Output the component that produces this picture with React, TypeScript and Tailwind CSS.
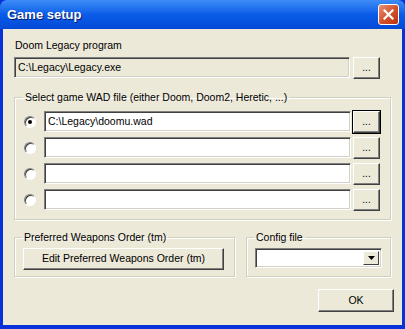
import React from 'react';

const font = { fontFamily: '"Liberation Sans", Arial, sans-serif' };

function TextBox({ value, grey }: { value?: string; grey?: boolean }) {
  return (
    <div
      className={`flex-1 h-[21px] flex items-center px-[3px] text-[10.5px] text-black border border-t-[#808080] border-l-[#808080] border-b-white border-r-white shadow-[inset_1px_1px_0_#404040,inset_-1px_-1px_0_#d4d0c8] ${
        grey ? 'bg-[#ece9d8]' : 'bg-white'
      }`}
    >
      {value}
    </div>
  );
}

function BrowseButton({ active }: { active?: boolean }) {
  return (
    <button
      className={`w-[27px] h-[22px] flex items-end justify-center pb-[5px] text-[10px] leading-none bg-[#ece9d8] border border-t-white border-l-white border-b-[#404040] border-r-[#404040] shadow-[inset_-1px_-1px_0_#808080] ${
        active ? 'outline outline-1 outline-black' : ''
      }`}
    >
      ...
    </button>
  );
}

function Radio({ checked }: { checked?: boolean }) {
  return (
    <div className="w-[12px] h-[12px] rounded-full border border-t-[#808080] border-l-[#808080] border-b-white border-r-white bg-white flex items-center justify-center shadow-[inset_1px_1px_0_#404040]">
      {checked && <div className="w-[4px] h-[4px] rounded-full bg-black" />}
    </div>
  );
}

const wadFiles = ['C:\\Legacy\\doomu.wad', '', '', ''];

export default function App() {
  return (
    <div className="w-[405px] h-[329px] flex flex-col bg-[#0831d9] overflow-hidden" style={font}>
      {/* Title bar */}
      <div className="h-[29px] flex items-center justify-between pl-[7px] pr-[6px] rounded-t-[7px] bg-gradient-to-b from-[#3d8cf7] via-[#0a5ce8] to-[#0449d6]">
        <span className="text-white font-bold text-[13px] [text-shadow:1px_1px_0_#0a1a6a]">Game setup</span>
        <div className="w-[21px] h-[21px] rounded-[3px] border border-white bg-gradient-to-br from-[#e8927a] via-[#d4532c] to-[#b8300c] flex items-center justify-center">
          <svg width="11" height="11" viewBox="0 0 11 11">
            <path d="M1.5 1.5 L9.5 9.5 M9.5 1.5 L1.5 9.5" stroke="white" strokeWidth="2.2" strokeLinecap="square" />
          </svg>
        </div>
      </div>

      {/* Body */}
      <div className="flex-1 mx-[3px] mb-[4px] bg-[#ece9d8] flex flex-col pt-[10px] pl-[11px] text-[10.5px] text-black">
        <div className="leading-[13px] pl-[1px]">Doom Legacy program</div>
        <div className="flex gap-[3px] mt-[5px] w-[366px] items-start">
          <TextBox value="C:\Legacy\Legacy.exe" grey />
          <BrowseButton />
        </div>

        <fieldset className="mt-[12px] w-[377px] border border-[#d0d0bf] shadow-[1px_1px_0_white,inset_1px_1px_0_white] pb-[8px] pt-[7px]">
          <legend className="ml-[8px] px-[2px] leading-[13px]">
            Select game WAD file (either Doom, Doom2, Heretic, ...)
          </legend>
          <div className="flex flex-col gap-[4px] pl-[9px]">
            {wadFiles.map((f, i) => (
              <div key={i} className="flex items-center">
                <Radio checked={i === 0} />
                <div className="flex gap-[2px] ml-[8px] w-[336px] items-start">
                  <TextBox value={f} />
                  <BrowseButton active={i === 0} />
                </div>
              </div>
            ))}
          </div>
        </fieldset>

        <div className="flex gap-[11px] mt-[11px] items-start">
          <fieldset className="w-[221px] border border-[#d0d0bf] shadow-[1px_1px_0_white,inset_1px_1px_0_white] pt-[4px] pb-[6px]">
            <legend className="ml-[7px] px-[2px] leading-[13px]">Preferred Weapons Order (tm)</legend>
            <div className="px-[8px]">
              <button className="w-[201px] h-[22px] bg-[#ece9d8] border border-t-white border-l-white border-b-[#404040] border-r-[#404040] shadow-[inset_-1px_-1px_0_#808080] text-[10.5px]">
                Edit Preferred Weapons Order (tm)
              </button>
            </div>
          </fieldset>
          <fieldset className="w-[145px] border border-[#d0d0bf] shadow-[1px_1px_0_white,inset_1px_1px_0_white] pt-[4px] pb-[8px]">
            <legend className="ml-[7px] px-[2px] leading-[13px]">Config file</legend>
            <div className="px-[8px]">
              <div className="h-[20px] flex bg-white border border-t-[#808080] border-l-[#808080] border-b-white border-r-white shadow-[inset_1px_1px_0_#404040,inset_-1px_-1px_0_#d4d0c8] p-[2px] justify-end">
                <div className="w-[16px] h-full bg-[#ece9d8] border border-t-white border-l-white border-b-[#404040] border-r-[#404040] flex items-center justify-center">
                  <svg width="7" height="4" viewBox="0 0 7 4">
                    <path d="M0 0 H7 L3.5 4 Z" fill="black" />
                  </svg>
                </div>
              </div>
            </div>
          </fieldset>
        </div>

        <div className="flex justify-end pr-[8px] mt-[12px]">
          <button className="w-[76px] h-[23px] bg-[#ece9d8] border border-t-white border-l-white border-b-[#404040] border-r-[#404040] shadow-[inset_-1px_-1px_0_#808080] text-[10.5px]">
            OK
          </button>
        </div>
      </div>
    </div>
  );
}
